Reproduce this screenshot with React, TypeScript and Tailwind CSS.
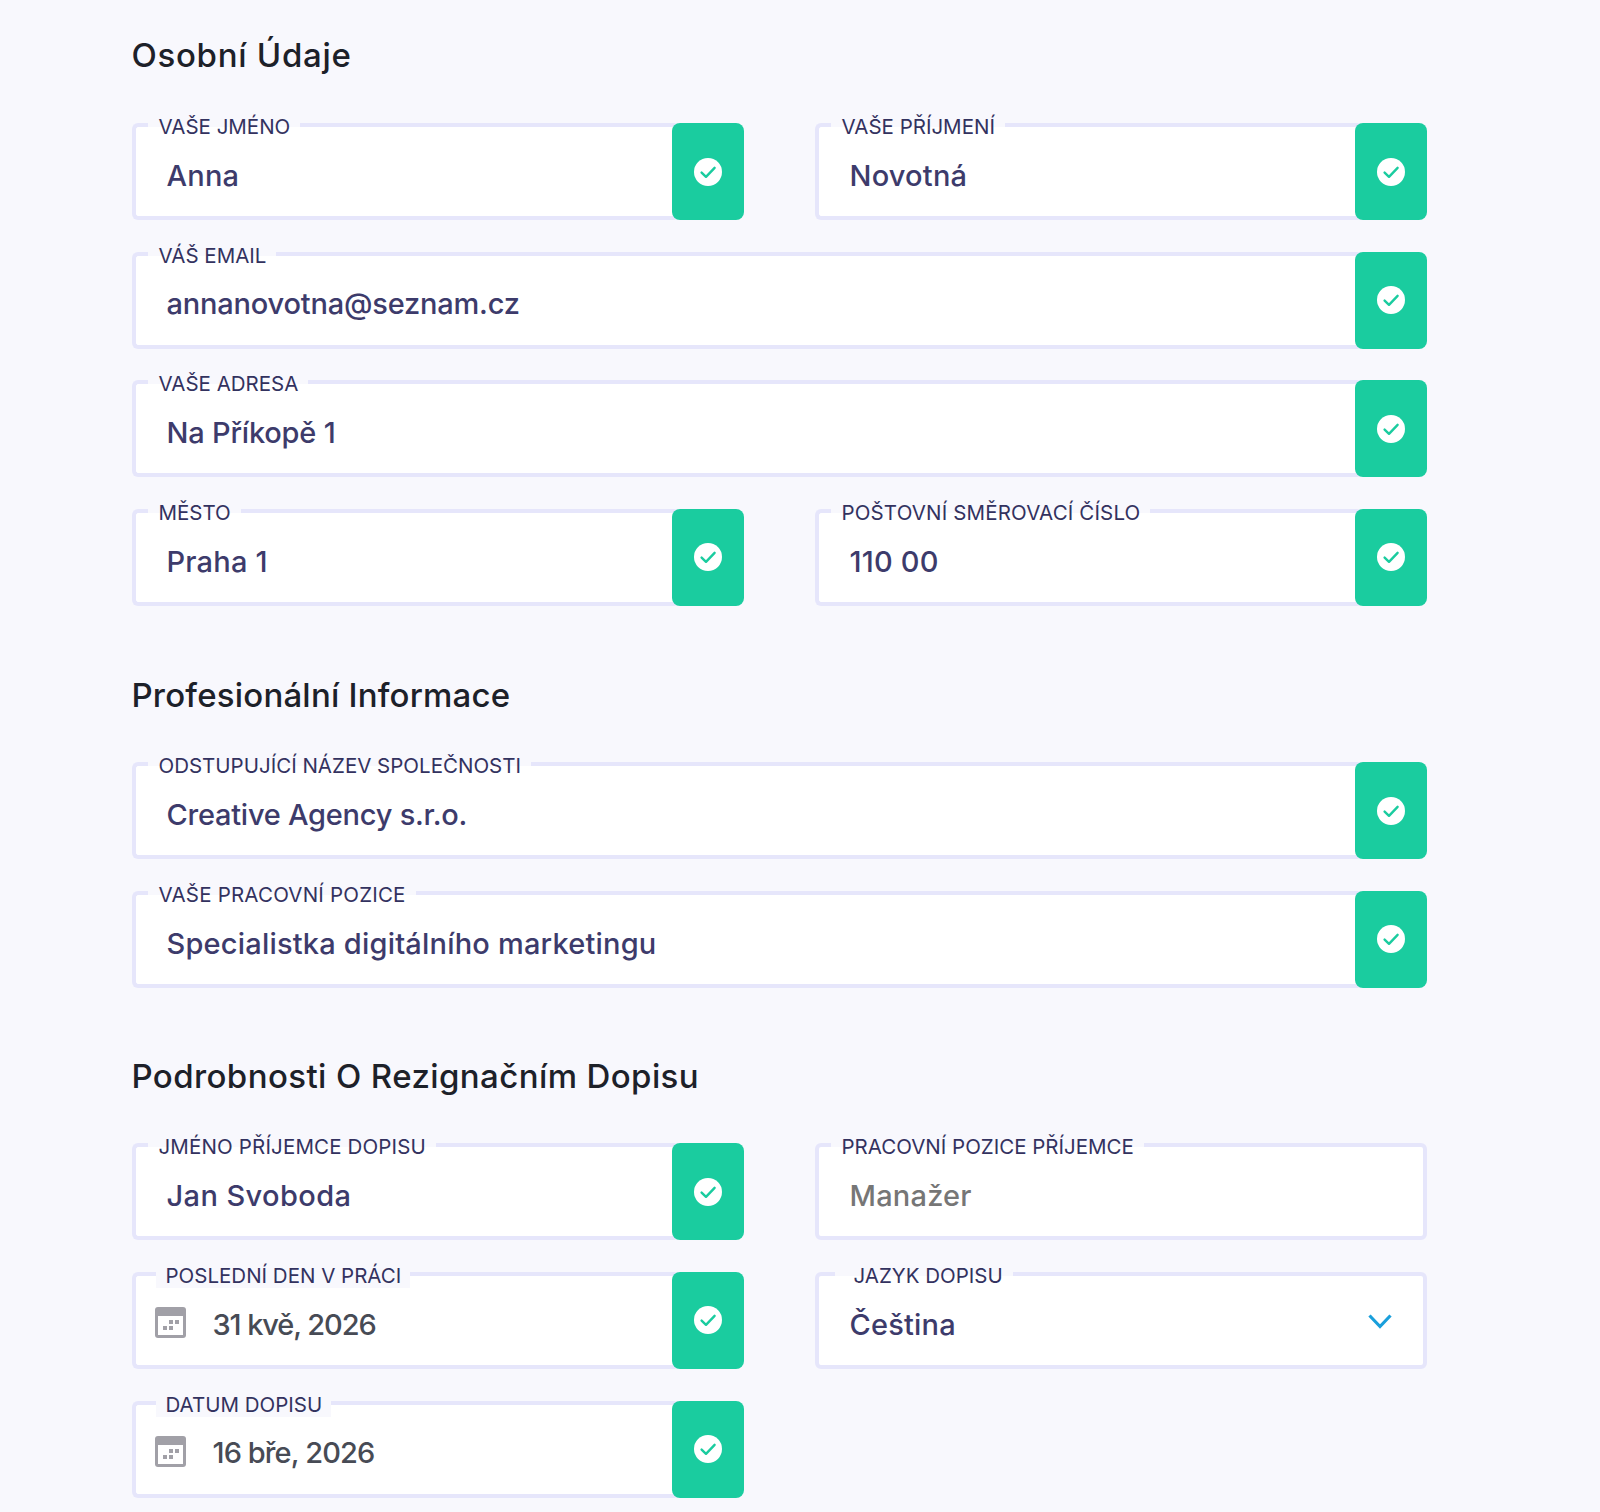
const fontStack = "font-['Inter','Noto_Sans',sans-serif]";

const CheckBadge = () => (
  <div className="relative -ml-2 flex w-[72px] shrink-0 items-center justify-center rounded-lg bg-[#1acc9f]">
    <svg width="28" height="28" viewBox="0 0 28 28">
      <circle cx="14" cy="14" r="14" fill="#ffffff" />
      <path d="M7.6 14.6l4.4 4.2 8.6-9" fill="none" stroke="#1acc9f" strokeWidth="2.4" strokeLinecap="round" strokeLinejoin="round" />
    </svg>
  </div>
);

const CalendarIcon = () => (
  <svg width="31" height="31" viewBox="0 0 31 31" className="absolute left-[19px] top-[31px]">
    <rect width="31" height="31" rx="3" fill="#a1a0a7" />
    <rect x="3" y="9" width="25" height="19" fill="#ffffff" />
    <rect x="8" y="19" width="4" height="4" fill="#a1a0a7" />
    <rect x="14" y="19" width="4" height="4" fill="#a1a0a7" />
    <rect x="14" y="13" width="4" height="4" fill="#a1a0a7" />
    <rect x="20" y="13" width="4" height="4" fill="#a1a0a7" />
  </svg>
);

type FieldProps = {
  label: string;
  value: string;
  done?: boolean;
  date?: boolean;
  select?: boolean;
  muted?: boolean;
  className?: string;
  valueClass?: string;
  labelClass?: string;
};

const Field = ({
  label,
  value,
  done = true,
  date,
  select,
  muted,
  className = "",
  valueClass = "tracking-[0.2px]",
  labelClass = "",
}: FieldProps) => (
  <div className={`relative flex h-[97px] ${className}`}>
    <div
      className={`relative flex min-w-0 flex-1 items-center rounded-md border-4 border-[#e6e6fb] bg-white ${done ? "border-r-0" : ""}`}
    >
      {date && <CalendarIcon />}
      <span
        className={`whitespace-nowrap pt-2 text-[29px] font-medium ${valueClass}
          ${date ? "pl-[77px] text-[#474b55]" : "pl-[31px]"}
          ${muted ? "text-[#767676]" : ""}
          ${!date && !muted ? "text-[#3d3b6b]" : ""}
        `}
      >
        {value}
      </span>
      {select && (
        <svg width="24" height="15" viewBox="0 0 24 15" className="absolute right-[31px] top-[38px]">
          <path d="M1.5 1.5L12 12.5 22.5 1.5" fill="none" stroke="#1a9fdb" strokeWidth="3.2" />
        </svg>
      )}
    </div>

    {done && <CheckBadge />}

    <div
      className={`absolute top-[-10px] h-[26px] whitespace-nowrap text-[20.5px] leading-[28px] text-[#33325f] ${labelClass}
        ${date ? "left-6 bg-[#f8f8fd] pl-2.5 pr-[9px]" : "left-4"}
        ${select ? "left-[20px] pl-[19px] pr-2.5" : ""}
        ${!date && !select ? "pl-[11px] pr-2.5" : ""}
      `}
    >
      {!date && <span className="absolute inset-x-0 top-2.5 h-1 bg-[#f8f8fd]" />}
      <span className="relative">{label}</span>
    </div>
  </div>
);

const SectionTitle = ({ title, className = "" }: { title: string; className?: string }) => (
  <h2 className={`text-[33px] font-medium leading-10 text-[#1d2129] ${className}`}>{title}</h2>
);

export default function App() {
  return (
    <div className={`min-h-[1512px] bg-[#f8f8fd] pl-[131.5px] pt-[35px] ${fontStack}`}>
      <div className="w-[1295px]">
        <SectionTitle title="Osobní Údaje" className="tracking-[0.7px]" />
        <div className="mt-12 grid grid-cols-2 gap-x-[71px] gap-y-[31.6px]">
          <Field label="VAŠE JMÉNO" value="Anna" />
          <Field label="VAŠE PŘÍJMENÍ" value="Novotná" />
          <Field label="VÁŠ EMAIL" value="annanovotna@seznam.cz" className="col-span-2" valueClass="tracking-[-0.2px]" />
          <Field label="VAŠE ADRESA" value="Na Příkopě 1" className="col-span-2" valueClass="tracking-[-0.2px]" />
          <Field label="MĚSTO" value="Praha 1" />
          <Field label="POŠTOVNÍ SMĚROVACÍ ČÍSLO" value="110 00" labelClass="tracking-[0.15px]" />
        </div>

        <SectionTitle title="Profesionální Informace" className="mt-[69px] tracking-[0.2px]" />
        <div className="mt-[47.5px] grid grid-cols-2 gap-x-[71px] gap-y-[31.6px]">
          <Field label="ODSTUPUJÍCÍ NÁZEV SPOLEČNOSTI" value="Creative Agency s.r.o." className="col-span-2" valueClass="tracking-[-0.25px]" />
          <Field label="VAŠE PRACOVNÍ POZICE" value="Specialistka digitálního marketingu" className="col-span-2" labelClass="tracking-[0.2px]" />
        </div>

        <SectionTitle title="Podrobnosti O Rezignačním Dopisu" className="mt-[68.5px] tracking-[0.4px]" />
        <div className="mt-[47px] grid grid-cols-2 gap-x-[71px] gap-y-[31.6px]">
          <Field label="JMÉNO PŘÍJEMCE DOPISU" value="Jan Svoboda" valueClass="tracking-[0.4px]" labelClass="tracking-[0.15px]" />
          <Field label="PRACOVNÍ POZICE PŘÍJEMCE" value="Manažer" done={false} muted />
          <Field label="POSLEDNÍ DEN V PRÁCI" value="31 kvě, 2026" date valueClass="tracking-[-1.1px]" />
          <Field label="JAZYK DOPISU" value="Čeština" done={false} select />
          <Field label="DATUM DOPISU" value="16 bře, 2026" date valueClass="tracking-[-0.9px]" />
        </div>
      </div>
    </div>
  );
}
